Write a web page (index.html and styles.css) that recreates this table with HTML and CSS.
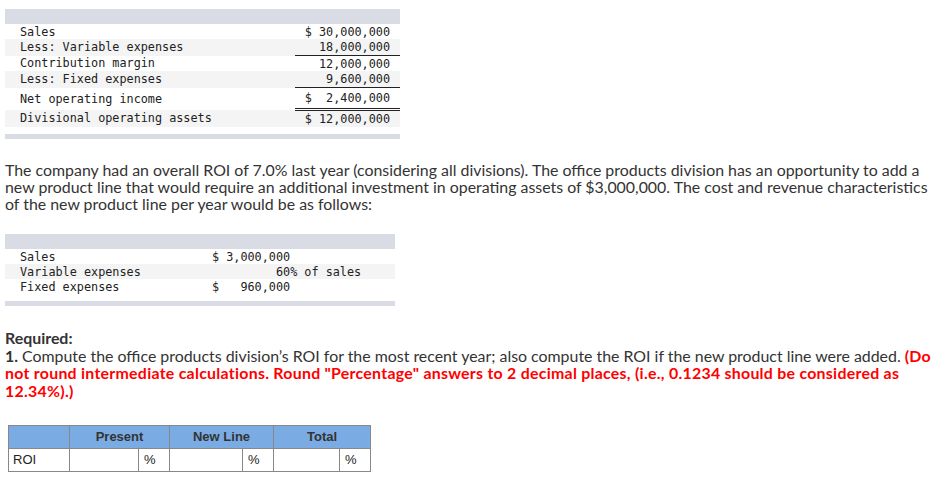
FILE: index.html
```html
<!DOCTYPE html>
<html>
<head>
<meta charset="utf-8">
<link rel="stylesheet" href="styles.css">
</head>
<body>
<div class="page">
  <table class="fin fin-top">
    <tr class="bar"><td colspan="2"></td></tr>
    <tr class="r15"><td class="lbl">Sales</td><td class="val">$ 30,000,000</td></tr>
    <tr class="alt r16"><td class="lbl">Less: Variable expenses</td><td class="val under">18,000,000</td></tr>
    <tr class="r15"><td class="lbl">Contribution margin</td><td class="val">12,000,000</td></tr>
    <tr class="alt r16"><td class="lbl">Less: Fixed expenses</td><td class="val under">9,600,000</td></tr>
    <tr class="tall"><td class="lbl">Net operating income</td><td class="val dbl">$  2,400,000</td></tr>
    <tr class="alt r16"><td class="lbl">Divisional operating assets</td><td class="val">$ 12,000,000</td></tr>
    <tr class="gap"><td colspan="2"></td></tr>
    <tr class="bar-b"><td colspan="2"></td></tr>
  </table>

  <p class="text">The company had an overall ROI of 7.0% last year (considering all divisions). The office products division has an opportunity to add a new product line that would require an additional investment in operating assets of $3,000,000. The cost and revenue characteristics of the new product line per year would be as follows:</p>

  <table class="fin fin-new">
    <tr class="bar"><td colspan="2"></td></tr>
    <tr class="r15"><td class="lbl">Sales</td><td class="v2">$ 3,000,000</td></tr>
    <tr class="alt r15"><td class="lbl">Variable expenses</td><td class="v2">         60% of sales</td></tr>
    <tr class="r15"><td class="lbl">Fixed expenses</td><td class="v2">$   960,000</td></tr>
    <tr class="gap"><td colspan="2"></td></tr>
    <tr class="bar-b"><td colspan="2"></td></tr>
  </table>

  <div class="req">
    <div class="req-title">Required:</div>
    <div class="req-body"><b>1.</b> Compute the office products division’s ROI for the most recent year; also compute the ROI if the new product line were added. <span class="red">(Do not round intermediate calculations. Round "Percentage" answers to 2 decimal places, (i.e., 0.1234 should be considered as 12.34%).)</span></div>
  </div>

  <table class="ans">
    <colgroup>
      <col class="w-c0">
      <col class="w-in1"><col class="w-pct">
      <col class="w-in2"><col class="w-pct">
      <col class="w-in3"><col class="w-pct">
    </colgroup>
    <tr class="head">
      <th></th>
      <th colspan="2">Present</th>
      <th colspan="2">New Line</th>
      <th colspan="2">Total</th>
    </tr>
    <tr>
      <td class="c0">ROI</td>
      <td></td><td class="pct">%</td>
      <td></td><td class="pct">%</td>
      <td></td><td class="pct">%</td>
    </tr>
  </table>
</div>
</body>
</html>
```

FILE: styles.css
```css
html, body {
  margin: 0;
  padding: 0;
  background: #fff;
}

.page {
  padding: 9px 0 0 5px;
}

.fin {
  border-collapse: collapse;
  font-family: "DejaVu Sans Mono", "Liberation Mono", monospace;
  font-size: 11.8px;
  color: #222;
}

.fin td {
  padding: 0;
  line-height: 14px;
  white-space: pre;
}

.fin .bar td,
.fin .bar-b td {
  background: #d9dce5;
}

.fin .bar td { height: 15px; }
.fin .bar-b td { height: 5px; }
.fin .gap td { height: 7px; }
.fin .r15 td { height: 15px; }
.fin .r16 td { height: 16px; }

.fin .alt td { background: #f4f4f4; }

.fin .lbl { padding-left: 15px; }

.fin-top { width: 395px; }
.fin-top .lbl { width: 275px; }
.fin-top .val {
  text-align: right;
  padding-right: 10px;
}
.fin-top .tall td { height: 20px; }
.fin-top .under { border-bottom: 1px solid #222; }
.fin-top .dbl { border-bottom: 3px double #222; }

.text {
  margin: 22px 0 0 0;
  width: 940px;
  font-family: "Lato", "Open Sans", sans-serif;
  font-size: 15.9px;
  line-height: 17px;
  color: #333;
}

.fin-new {
  margin-top: 22px;
  width: 390px;
}
.fin-new .lbl { width: 192px; }

.req {
  margin-top: 23px;
  width: 940px;
  font-family: "Lato", "Open Sans", sans-serif;
  font-size: 15.9px;
  line-height: 17.7px;
  color: #333;
}
.req-title { font-weight: bold; }
.req-body b { font-weight: bold; }
.red { color: #f00; font-weight: bold; letter-spacing: 0.27px; }

.ans {
  margin: 25px 0 0 3px;
  border-collapse: collapse;
  table-layout: fixed;
  width: 363px;
  font-family: "Liberation Sans", Arial, sans-serif;
  font-size: 13px;
  color: #222;
}
.w-c0 { width: 61px; }
.w-in1 { width: 69px; }
.w-in2 { width: 73px; }
.w-in3 { width: 66px; }
.w-pct { width: 31px; }

.ans th, .ans td {
  border: 1px solid #888;
  padding: 0;
  height: 22px;
}
.ans th {
  background: #7aace3;
  font-weight: bold;
  text-align: center;
  color: #333;
}
.ans .c0 { padding-left: 4px; }
.ans .pct { padding-left: 5px; }
```
